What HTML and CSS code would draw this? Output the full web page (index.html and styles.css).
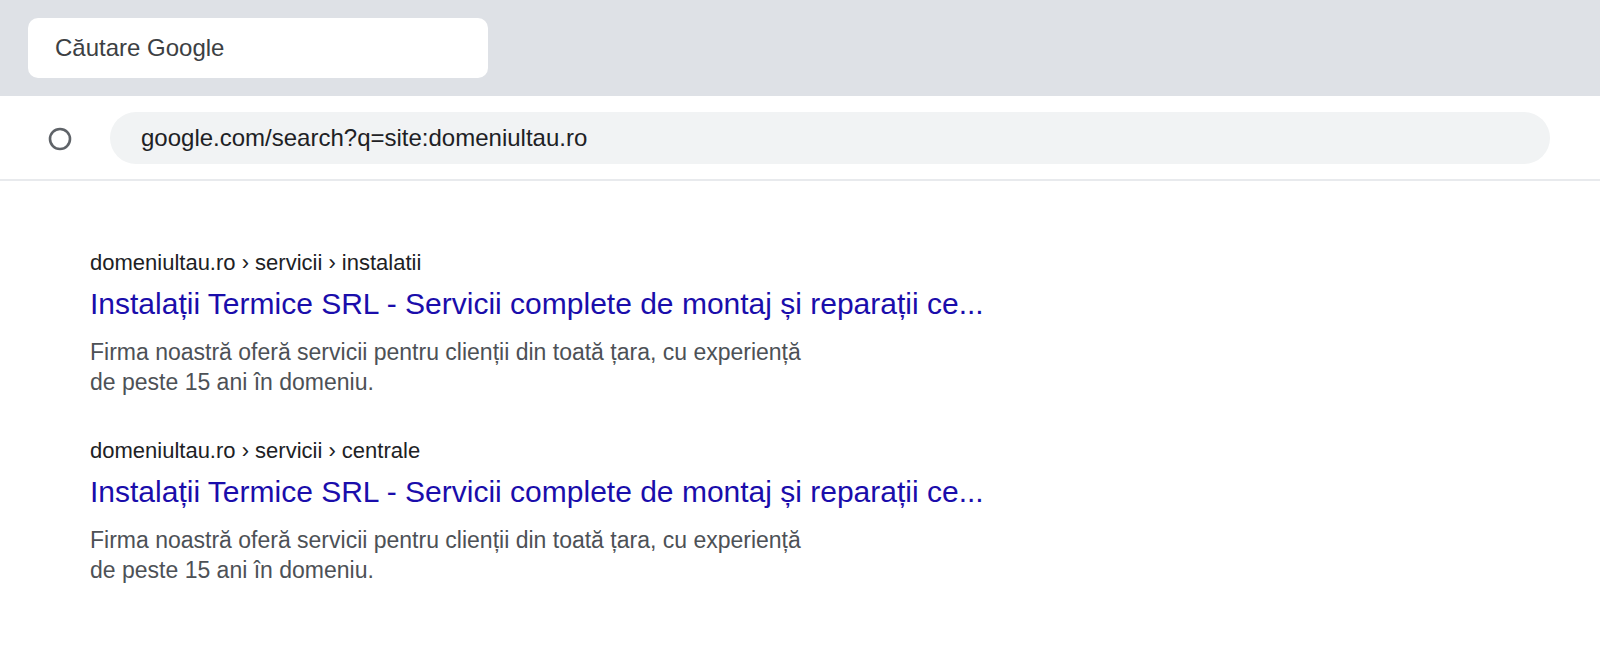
FILE: index.html
```html
<!DOCTYPE html>
<html lang="ro">
<head>
<meta charset="utf-8">
<title>Căutare Google</title>
<link rel="stylesheet" href="styles.css">
</head>
<body>
<div class="browser">
  <div class="tabbar">
    <div class="tab">Căutare Google</div>
  </div>
  <div class="addressbar">
    <svg class="reload" width="24" height="24" viewBox="0 0 24 24" aria-hidden="true">
      <circle cx="12" cy="12" r="10" fill="none" stroke="#5f6368" stroke-width="2.6"/>
    </svg>
    <div class="omnibox">google.com/search?q=site:domeniultau.ro</div>
  </div>
  <main class="results">
    <div class="result">
      <div class="crumb">domeniultau.ro › servicii › instalatii</div>
      <a class="title" href="#">Instalații Termice SRL - Servicii complete de montaj și reparații ce...</a>
      <p class="desc">Firma noastră oferă servicii pentru clienții din toată țara, cu experiență<br>de peste 15 ani în domeniu.</p>
    </div>
    <div class="result">
      <div class="crumb">domeniultau.ro › servicii › centrale</div>
      <a class="title" href="#">Instalații Termice SRL - Servicii complete de montaj și reparații ce...</a>
      <p class="desc">Firma noastră oferă servicii pentru clienții din toată țara, cu experiență<br>de peste 15 ani în domeniu.</p>
    </div>
  </main>
</div>
</body>
</html>
```

FILE: styles.css
```css
* { box-sizing: border-box; }
html, body {
  margin: 0;
  padding: 0;
  background: #ffffff;
  font-family: "Liberation Sans", Arial, Helvetica, sans-serif;
}
.browser {
  width: 1600px;
  min-height: 646px;
}
.tabbar {
  background: #dee1e6;
  height: 96px;
  padding: 18px 0 0 28px;
}
.tab {
  width: 460px;
  height: 60px;
  background: #ffffff;
  border-radius: 10px;
  padding-left: 27px;
  display: flex;
  align-items: center;
  font-size: 24px;
  color: #3c4043;
}
.addressbar {
  height: 85px;
  border-bottom: 2px solid #e8eaed;
  display: flex;
  align-items: flex-start;
  padding: 16px 50px 0 48px;
}
.reload {
  flex: none;
  margin-top: 15px;
}
.omnibox {
  margin-left: 38px;
  flex: 1;
  height: 52px;
  border-radius: 26px;
  background: #f1f3f4;
  padding-left: 31px;
  display: flex;
  align-items: center;
  font-size: 24px;
  color: #202124;
}
.results {
  padding: 68px 0 0 90px;
  display: flex;
  flex-direction: column;
  gap: 40px;
}
.result {
  display: flex;
  flex-direction: column;
  align-items: flex-start;
}
.crumb {
  font-size: 22px;
  line-height: 28px;
  color: #202124;
}
.title {
  margin-top: 7px;
  font-size: 30px;
  line-height: 40px;
  color: #1a0dab;
  text-decoration: none;
}
.desc {
  margin: 13px 0 0;
  font-size: 23px;
  line-height: 30px;
  color: #4d5156;
}
```
